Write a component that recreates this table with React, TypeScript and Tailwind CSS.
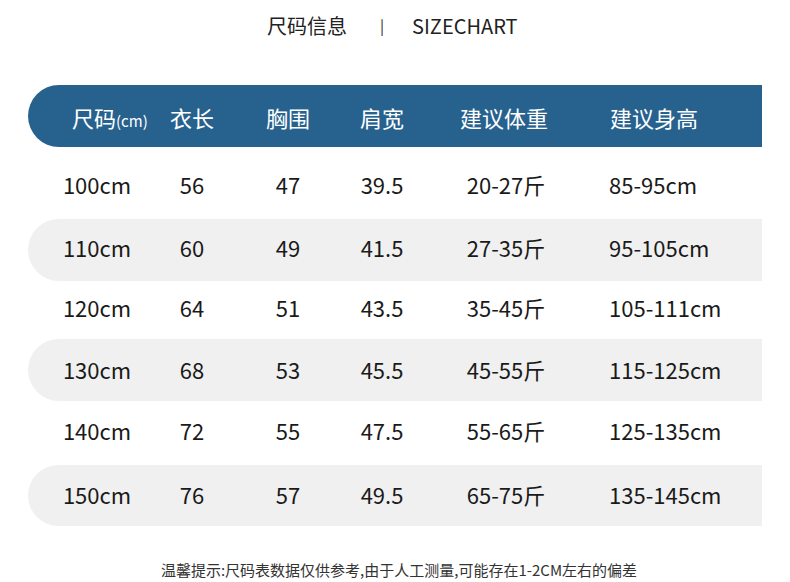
import React from "react";

const rows = [
  ["100cm", "56", "47", "39.5", "20-27斤", "85-95cm"],
  ["110cm", "60", "49", "41.5", "27-35斤", "95-105cm"],
  ["120cm", "64", "51", "43.5", "35-45斤", "105-111cm"],
  ["130cm", "68", "53", "45.5", "45-55斤", "115-125cm"],
  ["140cm", "72", "55", "47.5", "55-65斤", "125-135cm"],
  ["150cm", "76", "57", "49.5", "65-75斤", "135-145cm"],
];

const heights = [
  "h-[72px] pt-[2px]",
  "h-[62px] pb-[6px]",
  "h-[58px] pb-[6px]",
  "h-[62px] pb-[2px]",
  "h-[64px] pb-[6px]",
  "h-[61px] pb-[2px]",
];

const grid = "grid grid-cols-[138px_52px_140px_48px_200px_1fr] items-center";

export default function App() {
  return (
    <div
      className="w-[790px] h-[582px] bg-white flex flex-col text-[#1a1a1a]"
      style={{ fontFamily: '"Noto Sans CJK SC", "Noto Sans", sans-serif' }}
    >
      <div className="h-[52px] flex items-center pl-[267px] text-[20px] text-[#222]">
        <span>尺码信息</span>
        <span className="ml-[33px] text-[15px] text-[#222]">|</span>
        <span className="ml-[28px]">SIZECHART</span>
      </div>
      <div className="mt-[33px] ml-[28px] w-[734px] flex flex-col">
        <div className={`${grid} h-[62px] pt-[2px] bg-[#27628f] rounded-l-full text-white text-[22px]`}>
          <div className="pl-[44px] whitespace-nowrap">
            尺码<span className="text-[15px]">(cm)</span>
          </div>
          <div className="text-center">衣长</div>
          <div className="text-center">胸围</div>
          <div className="text-center">肩宽</div>
          <div className="text-center pr-[4px]">建议体重</div>
          <div className="pl-[4px]">建议身高</div>
        </div>
        {rows.map((r, i) => (
          <div
            key={i}
            className={`${grid} ${heights[i]} text-[22px] ${
              i % 2 === 1 ? "bg-[#f0f0f0] rounded-l-full" : ""
            }`}
          >
            <div className="text-center">{r[0]}</div>
            <div className="text-center">{r[1]}</div>
            <div className="text-center">{r[2]}</div>
            <div className="text-center">{r[3]}</div>
            <div className="text-center">{r[4]}</div>
            <div className="pl-[3px]">{r[5]}</div>
          </div>
        ))}
      </div>
      <div className="mt-[33px] text-center text-[15px] text-[#333] pl-[8px]">
        温馨提示:尺码表数据仅供参考,由于人工测量,可能存在1-2CM左右的偏差
      </div>
    </div>
  );
}
